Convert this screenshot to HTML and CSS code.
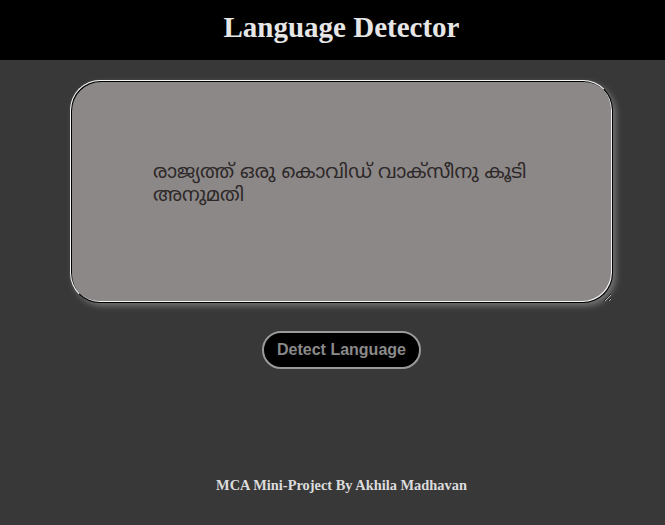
FILE: index.html
```html
<!DOCTYPE html>
<html>
<head>
<meta charset="utf-8">
<link rel="stylesheet" href="styles.css">
</head>
<body>
<header class="top"><h1 class="title">Language Detector</h1></header>
<main class="main">
<textarea class="input">രാജ്യത്ത് ഒരു കൊവിഡ് വാക്സീനു കൂടി അനുമതി</textarea>
<button class="btn">Detect Language</button>
<p class="foot">MCA Mini-Project By Akhila Madhavan</p>
</main>
</body>
</html>
```
FILE: styles.css
```css
html, body { margin: 0; padding: 0; }
body { background: #383838; font-family: "Liberation Serif", serif; height: 525px; overflow: hidden; }
.top { background: #000; height: 60px; box-sizing: border-box; padding: 0 0 6px 18px; display: flex; align-items: center; justify-content: center; }
.title { margin: 0; color: #e6e6e6; font-size: 29px; font-weight: bold; font-family: "Liberation Serif", serif; }
.main { display: flex; flex-direction: column; align-items: center; padding-left: 18px; padding-top: 20px; }
.input { box-sizing: border-box; width: 543px; height: 223px; background: #8c8888; border: 1px solid; border-color: #f4f4f4 #000 #000 #f4f4f4; border-radius: 30px; box-shadow: inset 1px 1px 0 #000, inset -1px -1px 0 #f4f4f4, 3px 3px 6px rgba(255,255,255,0.3); padding: 81px 78px 20px 82px; font-family: "Noto Sans Malayalam", "Noto Sans", sans-serif; font-size: 19.4px; line-height: 23px; color: #2e2828; outline: none; }
.btn { margin-top: 28px; height: 38px; padding: 0 13px; background: #000; color: #8a8a8a; border: 2px solid #9a9a9a; border-radius: 20px; font-family: "Liberation Sans", sans-serif; font-weight: bold; font-size: 16px; }
.foot { margin: 108px 0 0; color: #dcdcdc; font-weight: bold; font-size: 14.4px; }
```
